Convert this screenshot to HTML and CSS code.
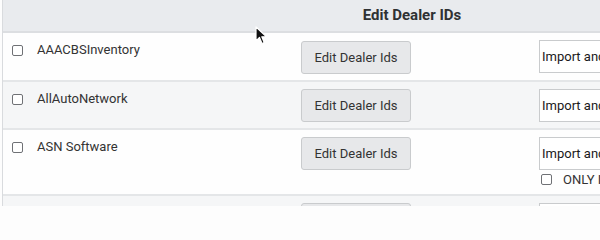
FILE: index.html
```html
<!DOCTYPE html>
<html>
<head>
<meta charset="utf-8">
<link rel="stylesheet" href="styles.css">
</head>
<body>
<div class="table">
  <div class="row head">
    <div class="cell c1"></div>
    <div class="cell c2 th">Edit Dealer IDs</div>
    <div class="cell c3"></div>
  </div>
  <div class="row">
    <div class="cell c1"><span class="cb"></span><span class="name">AAACBSInventory</span></div>
    <div class="cell c2"><button class="btn">Edit Dealer Ids</button></div>
    <div class="cell c3"><div class="sel">Import and Update</div></div>
  </div>
  <div class="row alt">
    <div class="cell c1"><span class="cb"></span><span class="name">AllAutoNetwork</span></div>
    <div class="cell c2"><button class="btn">Edit Dealer Ids</button></div>
    <div class="cell c3"><div class="sel">Import and Update</div></div>
  </div>
  <div class="row tall">
    <div class="cell c1"><span class="cb"></span><span class="name">ASN Software</span></div>
    <div class="cell c2"><button class="btn">Edit Dealer Ids</button></div>
    <div class="cell c3">
      <div class="sel">Import and Update</div>
      <label class="only"><span class="cb"></span><span>ONLY IMPORT</span></label>
    </div>
  </div>
  <div class="row alt">
    <div class="cell c1"><span class="cb"></span><span class="name">Autobase</span></div>
    <div class="cell c2"><button class="btn">Edit Dealer Ids</button></div>
    <div class="cell c3"><div class="sel">Import and Update</div></div>
  </div>
</div>
<svg class="cursor" width="14" height="20" viewBox="0 0 14 20">
  <path d="M1 1 L1 15 L4.5 11.5 L7 17.5 L9.2 16.6 L6.8 10.8 L11.5 10.8 Z" fill="#111" stroke="#fff" stroke-width="1.2" stroke-linejoin="round"/>
</svg>
</body>
</html>
```

FILE: styles.css
```css
html, body {
  margin: 0;
  padding: 0;
  background: #fdfdfd;
  overflow: hidden;
}
body {
  font-family: Roboto, "Liberation Sans", sans-serif;
  font-size: 13px;
  color: #333;
  position: relative;
  width: 600px;
  height: 206px;
}
.table {
  margin-left: 2px;
  border-left: 1px solid #d9dbde;
  width: 900px;
}
.row {
  display: flex;
  background: #fefefe;
  border-bottom: 2px solid #e4e6e8;
  height: 47px;
}
.row.alt { background: #f5f6f7; height: 46px; }
.row.tall { height: 64px; }
.row.head {
  background: #e9ebee;
  height: 31px;
  border-bottom: 2px solid #dcdee1;
}
.cell { box-sizing: border-box; }
.c1 {
  width: 289px;
  display: flex;
  align-items: center;
  align-self: flex-start;
  padding: 10px 0 0 9px;
  gap: 14px;
}
.c2 {
  width: 240px;
  padding: 8px 0 0 9px;
}
.alt .c2, .tall .c2 { padding-top: 7px; }
.alt .c3, .tall .c3 { padding-top: 7px; }
.c3 {
  flex: 1;
  padding: 7px 0 0 7px;
}
.th {
  padding: 0;
  text-align: center;
  font-weight: 700;
  color: #2f3133;
  line-height: 30px;
  font-size: 15px;
}
.cb {
  display: inline-block;
  width: 9px;
  height: 9px;
  border: 1.5px solid #6f7175;
  border-radius: 2px;
  background: #fff;
  flex: none;
}
.name {
  line-height: 14px;
  color: #333;
}
.btn {
  display: block;
  width: 110px;
  height: 33px;
  box-sizing: border-box;
  background: #e7e8ea;
  border: 1px solid #c9cbcd;
  border-radius: 3px;
  font-family: Roboto, "Liberation Sans", sans-serif;
  font-size: 13px;
  color: #333;
  padding: 0;
}
.sel {
  box-sizing: border-box;
  width: 200px;
  height: 33px;
  border: 1px solid #c9cbcd;
  background: #fff;
  line-height: 31px;
  padding-left: 2px;
  color: #1a1a1a;
  font-weight: 400;
  white-space: nowrap;
  overflow: hidden;
}
.only {
  display: flex;
  align-items: center;
  gap: 11px;
  margin-top: 2px;
  padding-left: 2px;
  color: #333;
  white-space: nowrap;
}
.cursor {
  position: absolute;
  left: 255px;
  top: 26px;
}
```
